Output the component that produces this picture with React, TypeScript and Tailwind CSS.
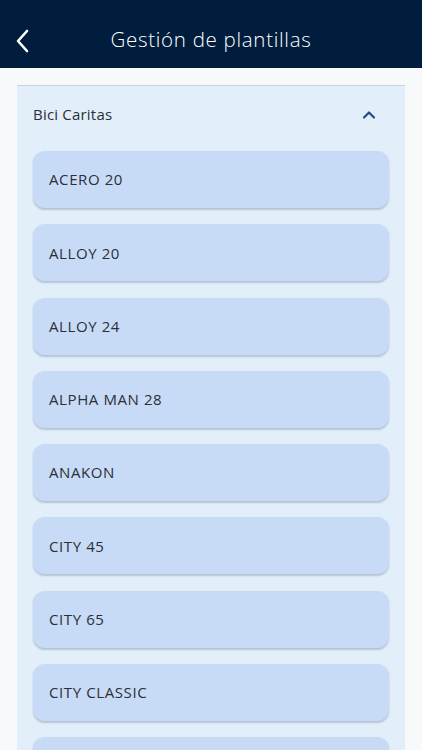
import React from "react";

const items = [
  "ACERO 20",
  "ALLOY 20",
  "ALLOY 24",
  "ALPHA MAN 28",
  "ANAKON",
  "CITY 45",
  "CITY 65",
  "CITY CLASSIC",
  "",
];

export default function App() {
  return (
    <div
      className="w-[422px] h-[750px] overflow-hidden bg-[#f8f9fa] flex flex-col"
      style={{ fontFamily: '"Open Sans", "Noto Sans", sans-serif' }}
    >
      <div className="h-[68px] shrink-0 bg-[#001d3d] flex items-center relative">
        <div className="absolute left-[14px] top-[28px]">
          <svg width="18" height="26" viewBox="0 0 18 26" fill="none">
            <path d="M13 3 L4 13 L13 23" stroke="#ffffff" strokeWidth="2.6" strokeLinecap="round" strokeLinejoin="round" />
          </svg>
        </div>
        <div className="w-full text-center text-white font-light text-[20.5px] tracking-[0.7px] pt-[10px]">
          Gestión de plantillas
        </div>
      </div>
      <div className="pt-[17px] px-[17px] flex-1">
        <div className="bg-[#e2effb] border-t border-[#c9d2dc]">
          <div className="h-[57px] flex items-center justify-between pl-[16px] pr-[29px]">
            <span className="text-[15px] text-[#2a2f38] tracking-[0.2px]">Bici Caritas</span>
            <svg width="14" height="10" viewBox="0 0 14 10" fill="none">
              <path d="M2 7.5 L7 2.5 L12 7.5" stroke="#1f4e86" strokeWidth="2.2" strokeLinecap="round" strokeLinejoin="round" />
            </svg>
          </div>
          <div className="flex flex-col gap-[16.25px] px-[16px] pt-[8px]">
            {items.map((t, i) => (
              <div
                key={i}
                className="h-[57px] rounded-[12px] bg-[#c8dbf6] shadow-[0_1.5px_2px_rgba(60,80,110,0.28)] flex items-center px-[16px]"
              >
                <span className="text-[15px] text-[#2a2f38] tracking-[0.6px]">{t}</span>
              </div>
            ))}
          </div>
        </div>
      </div>
    </div>
  );
}
